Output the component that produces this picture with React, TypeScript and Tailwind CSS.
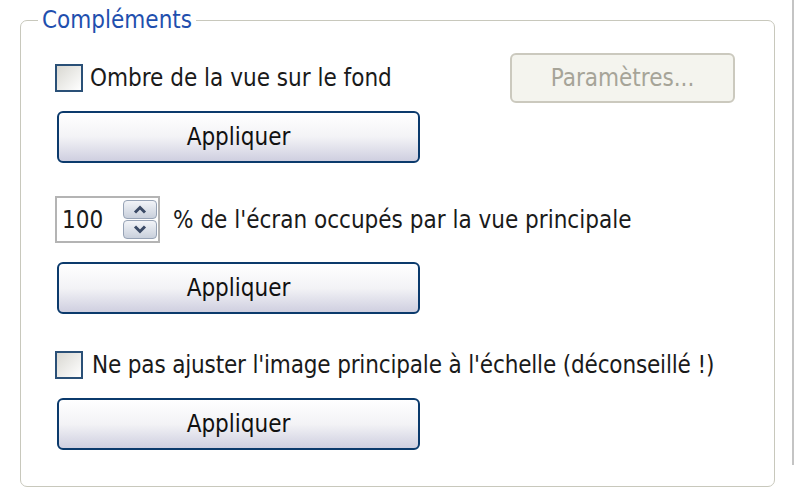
import React from "react";

const font = { fontFamily: '"DejaVu Sans Condensed", "DejaVu Sans", sans-serif' };

const Checkbox = () => (
  <div className="w-[28px] h-[28px] shrink-0 border-2 border-[#2a5077] bg-gradient-to-br from-[#d9d8d2] to-white" />
);

const ApplyButton = () => (
  <button className="ml-[2px] w-[363px] h-[52px] rounded-[6px] border-2 border-[#0b3a6c] bg-gradient-to-b from-white via-[#f3f3f6] to-[#cfcfe0] text-[24px] leading-none text-[#111]">
    Appliquer
  </button>
);

const Chevron = ({ up }: { up: boolean }) => (
  <svg width="14" height="9" viewBox="0 0 14 9">
    <path
      d={up ? "M2 7.5 L7 2.5 L12 7.5" : "M2 1.5 L7 6.5 L12 1.5"}
      fill="none"
      stroke="#3b4a66"
      strokeWidth="3"
    />
  </svg>
);

export default function App() {
  return (
    <div className="w-[800px] h-[502px] bg-white flex items-start pl-[20px] text-[#1a1a1a]" style={font}>
      <fieldset className="w-[755px] h-[479px] mt-[8px] border border-[#c8c8bc] rounded-[7px] p-0 m-0">
        <legend className="ml-[17px] px-[4px] text-[24px] leading-[24px] text-[#1f4fae]">Compléments</legend>

        <div className="flex flex-col items-start pl-[34px] pr-[39px] pt-[21px]">
          {/* ombre + paramètres */}
          <div className="flex items-center justify-between self-stretch h-[50px]">
            <label className="flex items-center gap-[7px] text-[24px] leading-none">
              <Checkbox />
              <span>Ombre de la vue sur le fond</span>
            </label>
            <button className="w-[225px] h-[50px] rounded-[6px] border-2 border-[#cbc9be] bg-[#f4f4ee] text-[24px] leading-none text-[#a6a498]">
              Paramètres...
            </button>
          </div>
          <div className="mt-[8px]">
            <ApplyButton />
          </div>

          {/* pourcentage */}
          <div className="flex items-center mt-[33px] h-[47px]">
            <div className="w-[105px] h-[47px] border-2 border-[#b4b4b4] flex items-center justify-between pl-[5px] pr-[1px]">
              <span className="text-[24px] leading-none">100</span>
              <div className="flex flex-col gap-[1px]">
                <div className="w-[34px] h-[19px] rounded-[4px] border border-[#97a3b6] bg-gradient-to-b from-[#f2f4f8] to-[#c9d0dc] flex items-center justify-center">
                  <Chevron up />
                </div>
                <div className="w-[34px] h-[19px] rounded-[4px] border border-[#97a3b6] bg-gradient-to-b from-[#f2f4f8] to-[#c9d0dc] flex items-center justify-center">
                  <Chevron up={false} />
                </div>
              </div>
            </div>
            <span className="ml-[13px] text-[24px] leading-none">% de l'écran occupés par la vue principale</span>
          </div>
          <div className="mt-[19px]">
            <ApplyButton />
          </div>

          {/* échelle */}
          <label className="flex items-center gap-[9px] mt-[36px] h-[30px] text-[24px] leading-none">
            <Checkbox />
            <span className="tracking-[-0.17px]">Ne pas ajuster l'image principale à l'échelle (déconseillé !)</span>
          </label>
          <div className="mt-[18px]">
            <ApplyButton />
          </div>
        </div>
      </fieldset>
      <div className="ml-[17px] w-[2px] h-[465px] bg-[#c4c4c4]" />
    </div>
  );
}
